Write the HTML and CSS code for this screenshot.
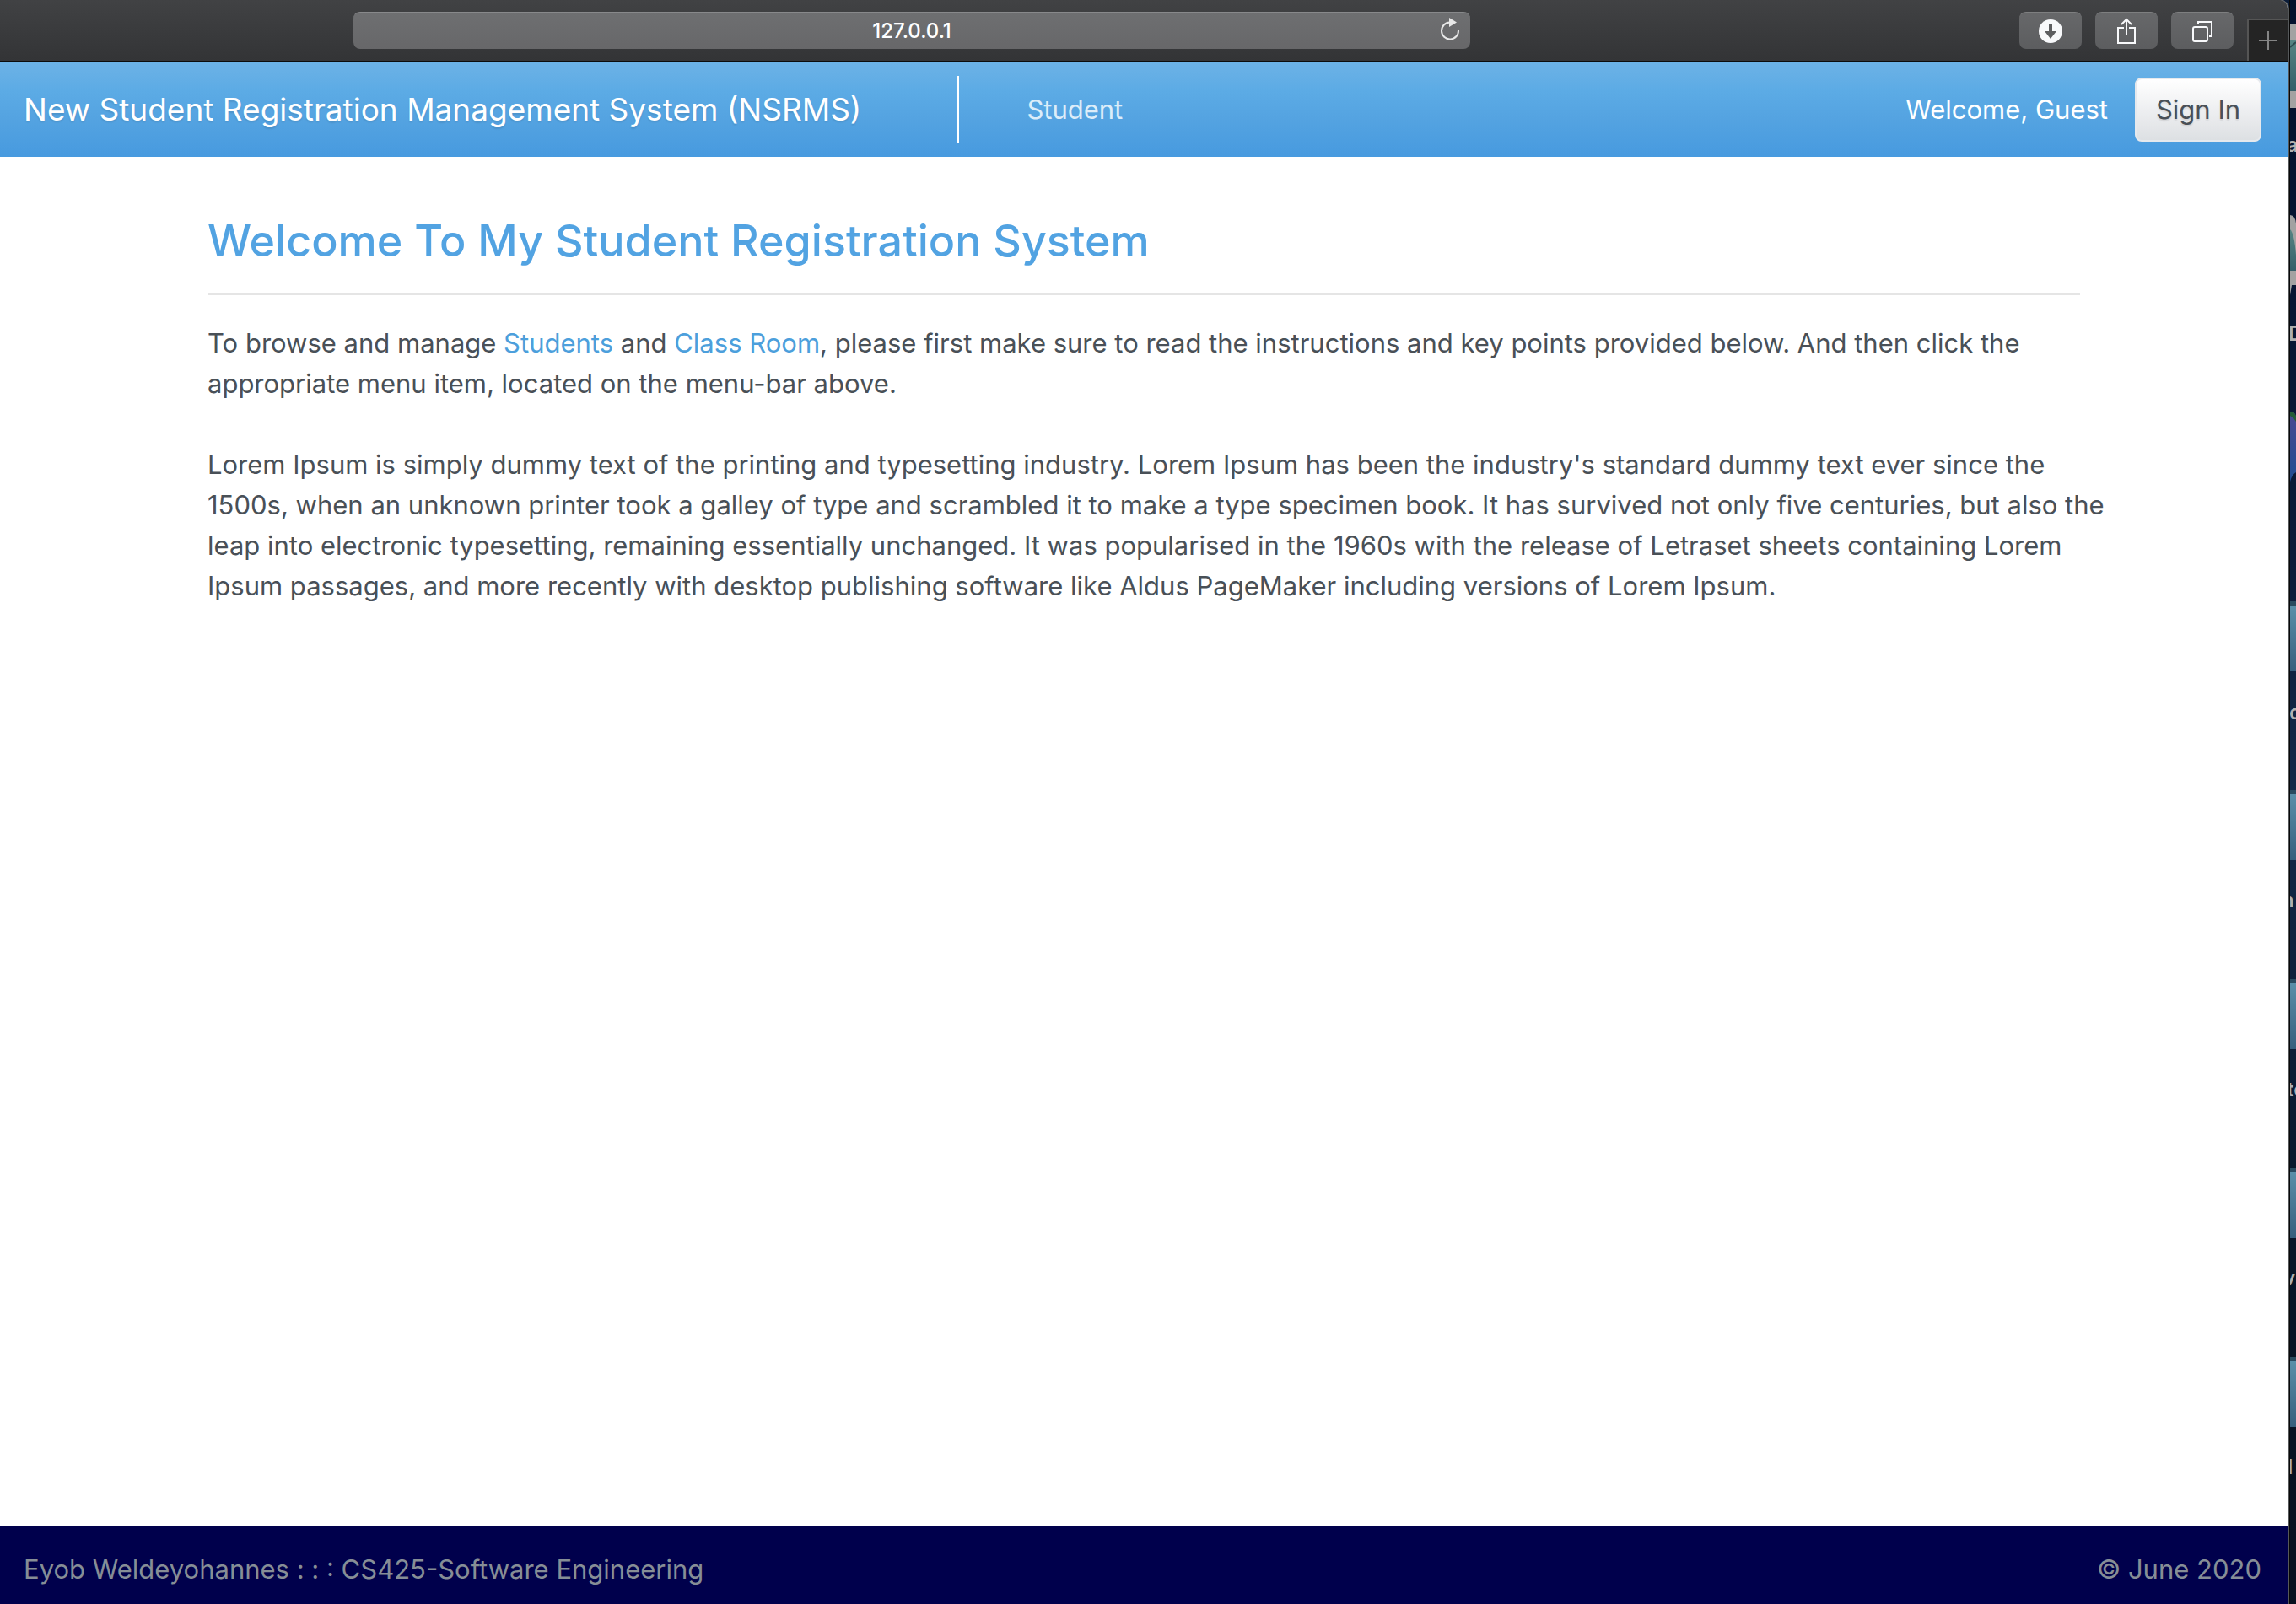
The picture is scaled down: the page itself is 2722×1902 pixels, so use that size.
FILE: index.html
```html
<!DOCTYPE html>
<html lang="en">
<head>
<meta charset="utf-8">
<meta name="viewport" content="width=device-width, initial-scale=1">
<title>Student Registration System</title>
<link rel="stylesheet" href="styles.css">
</head>
<body>
<div class="window">
  <div class="toolbar">
    <input class="address" type="text" value="127.0.0.1" aria-label="Address">
    <button class="reload" type="button" aria-label="Reload">
      <svg width="26" height="28" viewBox="0 0 26 28"><path d="M12 5.5A10 10 0 1 0 22 15" fill="none" stroke="#e8e8e8" stroke-width="2"/><path d="M11 0v11l9-5.500z" fill="#e8e8e8"/></svg>
    </button>
    <div class="tools">
      <button class="tool" type="button" aria-label="Downloads">
        <svg width="28" height="28" viewBox="0 0 28 28"><circle cx="14" cy="14" r="14" fill="#f8f9fb"/><path d="M12 6h4v8h5l-7 9-7-9h5z" fill="#5d5e60"/></svg>
      </button>
      <button class="tool" type="button" aria-label="Share">
        <svg width="24" height="32" viewBox="0 0 24 32"><path d="M9 12H2v18h20V12h-7M12 21V3M6 8l6-6 6 6" fill="none" stroke="#f8f9fb" stroke-width="2"/></svg>
      </button>
      <button class="tool" type="button" aria-label="Show all tabs">
        <svg width="26" height="26" viewBox="0 0 26 26"><rect x="2" y="8" width="17" height="17" rx="2" fill="none" stroke="#f8f9fb" stroke-width="2"/><path d="M8 5V2h16v17h-3" fill="none" stroke="#f8f9fb" stroke-width="2"/></svg>
      </button>
    </div>
    <button class="new-tab" type="button" aria-label="New tab">
      <svg width="22" height="22" viewBox="0 0 22 22"><path d="M11 0v22M0 11h22" stroke="#858585" stroke-width="2"/></svg>
    </button>
  </div>
  <header class="navbar">
    <a class="brand" href="#">New Student Registration Management System (NSRMS)</a>
    <nav class="menu"><a class="menu-link" href="#">Student</a></nav>
    <span class="greeting">Welcome, Guest</span>
    <button class="sign-in" type="button">Sign In</button>
  </header>
  <main class="content">
    <h1 class="title">Welcome To My Student Registration System</h1>
    <p class="text">To browse and manage <a class="link" href="#">Students</a> and <a class="link" href="#">Class Room</a>, please first make sure to read the instructions and key points provided below. And then click the<br>appropriate menu item, located on the menu-bar above.</p>
    <p class="text">Lorem Ipsum is simply dummy text of the printing and typesetting industry. Lorem Ipsum has been the industry's standard dummy text ever since the<br>1500s, when an unknown printer took a galley of type and scrambled it to make a type specimen book. It has survived not only five centuries, but also the<br>leap into electronic typesetting, remaining essentially unchanged. It was popularised in the 1960s with the release of Letraset sheets containing Lorem<br>Ipsum passages, and more recently with desktop publishing software like Aldus PageMaker including versions of Lorem Ipsum.</p>
  </main>
  <footer class="footer"><span>Eyob Weldeyohannes : : : CS425-Software Engineering</span><span>© June 2020</span></footer>
</div>
<aside class="desktop" aria-label="Desktop">
  <svg class="desktop-icons" width="7" height="1902" viewBox="0 0 7 1902">
    <defs>
      <linearGradient id="folder" x1="0" y1="0" x2="0" y2="1"><stop offset="0" stop-color="#5a8fa9"/><stop offset="1" stop-color="#365f7d"/></linearGradient>
      <linearGradient id="picture" x1="0" y1="0" x2="0" y2="1"><stop offset="0" stop-color="#568584"/><stop offset="1" stop-color="#335f69"/></linearGradient>
      <linearGradient id="globe" x1="0" y1="0" x2="0" y2="1"><stop offset="0" stop-color="#494a91"/><stop offset="1" stop-color="#204d92"/></linearGradient>
    </defs>
    <rect y="29" width="7" height="99" fill="#a2a2a2"/>
    <rect y="47" width="7" height="61" fill="url(#picture)"/>
    <path d="M0 56l7-6" stroke="#2c4b50" stroke-width="2"/>
    <path d="M0 255q6 0 7 10v73H2l-2 12z" fill="#a2a2a2"/>
    <path d="M0 272q5 5 7 30v19H0z" fill="url(#picture)"/>
    <path d="M0 489q5-2 7 5v66q-5 3-7 11z" fill="url(#globe)"/>
    <path d="M0 489q5-2 7 5v6q-3-5-7-7z" fill="#245c37"/>
    <g fill="#294b60"><rect y="713" width="7" height="5"/><rect y="937" width="7" height="5"/><rect y="1161" width="7" height="5"/><rect y="1385" width="7" height="5"/><rect y="1609" width="7" height="5"/></g>
    <g fill="url(#folder)"><rect y="718" width="7" height="78"/><rect y="942" width="7" height="78"/><rect y="1166" width="7" height="78"/><rect y="1390" width="7" height="78"/><rect y="1614" width="7" height="78"/></g>
    <g class="labels"><text x="-4" y="180">a</text><text x="-2" y="404">D</text><text x="-1" y="853">c</text><text x="-10" y="1076">n</text><text x="-4" y="1300">te</text><text x="-8" y="1524">v</text><text x="-3" y="1748">l</text></g>
  </svg>
</aside>
</body>
</html>
```
FILE: styles.css
```css
* { box-sizing: border-box; }

body {
  margin: 0;
  min-height: 100vh;
  display: grid;
  grid-template-columns: 1fr 8px;
  background: #0b1c38;
  font-family: Inter, "Liberation Sans", sans-serif;
  font-size: 31px;
  line-height: 48px;
  color: #495057;
}

a { text-decoration: none; }
button, input { font: inherit; margin: 0; }
svg { display: block; }

.window {
  display: flex;
  flex-direction: column;
  background: #fff;
  border-right: 2px solid #55585a;
  border-top-right-radius: 10px;
  overflow: hidden;
}

.toolbar {
  display: flex;
  align-items: flex-start;
  height: 74px;
  padding: 14px 0 0 419px;
  background: linear-gradient(#414244, #333436);
  border-bottom: 2px solid #0c0c0c;
}

.address {
  width: 1324px;
  height: 44px;
  padding: 0;
  border: 0;
  border-top: 1px solid #88898b;
  border-radius: 8px;
  background: linear-gradient(#6e6f71, #676769);
  color: #fff;
  font-size: 24px;
  font-weight: 500;
  text-align: center;
}

.reload {
  margin: 7px 0 0 -36px;
  padding: 0;
  border: 0;
  background: none;
}

.tools {
  display: flex;
  gap: 16px;
  margin-left: auto;
}

.tool {
  display: flex;
  align-items: center;
  justify-content: center;
  width: 74px;
  height: 44px;
  padding: 0;
  border: 0;
  border-top: 1px solid #7e7f80;
  border-radius: 8px;
  background: linear-gradient(#67686a, #5c5d5f);
}

.new-tab {
  display: flex;
  align-items: center;
  justify-content: center;
  width: 48px;
  height: 50px;
  margin: 8px 0 0 16px;
  padding: 0;
  border: 0 solid #555;
  border-width: 2px 0 0 2px;
  background: #242424;
}

.navbar {
  display: flex;
  align-items: center;
  height: 112px;
  padding: 0 31px 0 28px;
  background: linear-gradient(#6cb2e6, #5cabe5 30%, #54a3e1 60%, #479adf);
  color: #fff;
}

.brand {
  color: #fff;
  font-size: 37px;
  text-shadow: 0 2px 2px rgba(0, 0, 0, .1);
}

.menu {
  display: flex;
  align-items: center;
  height: 80px;
  margin-left: 114px;
  padding-left: 80px;
  border-left: 2px solid #fff;
}

.menu-link { color: #dcedf9; }
.greeting { margin-left: auto; }

.sign-in {
  width: 150px;
  height: 76px;
  margin-left: 32px;
  padding: 0;
  border: 2px solid #e6e9ed;
  border-radius: 8px;
  background: linear-gradient(#fff, #eeeff1 50%, #dde0e3);
  color: #495057;
  text-shadow: 0 2px 2px rgba(0, 0, 0, .1);
}

.content {
  flex: 1;
  width: 100%;
  max-width: 2220px;
  margin: 0 auto;
  padding-top: 66px;
}

.title {
  margin: 0 0 33px;
  padding-bottom: 28px;
  border-bottom: 2px solid #e5e5e5;
  color: #52a3e2;
  font-size: 52px;
  font-weight: 500;
  line-height: 68px;
}

.text { margin: 0 -32px 48px 0; }
.link { color: #4c9fdc; }

.footer {
  display: flex;
  justify-content: space-between;
  height: 92px;
  padding: 27px 31px 0 28px;
  background: #00004c;
  color: #868e96;
}

.desktop {
  position: relative;
  border-left: 1px solid #080808;
  background: linear-gradient(#03102d, #0b1c3a 35%, #14294a 50%, #08172b 75%, #07101f);
  overflow: hidden;
}

.desktop-icons { position: absolute; top: 0; left: 0; }

.labels {
  fill: #b0b0b0;
  font-size: 24px;
  font-weight: 600;
}
```
